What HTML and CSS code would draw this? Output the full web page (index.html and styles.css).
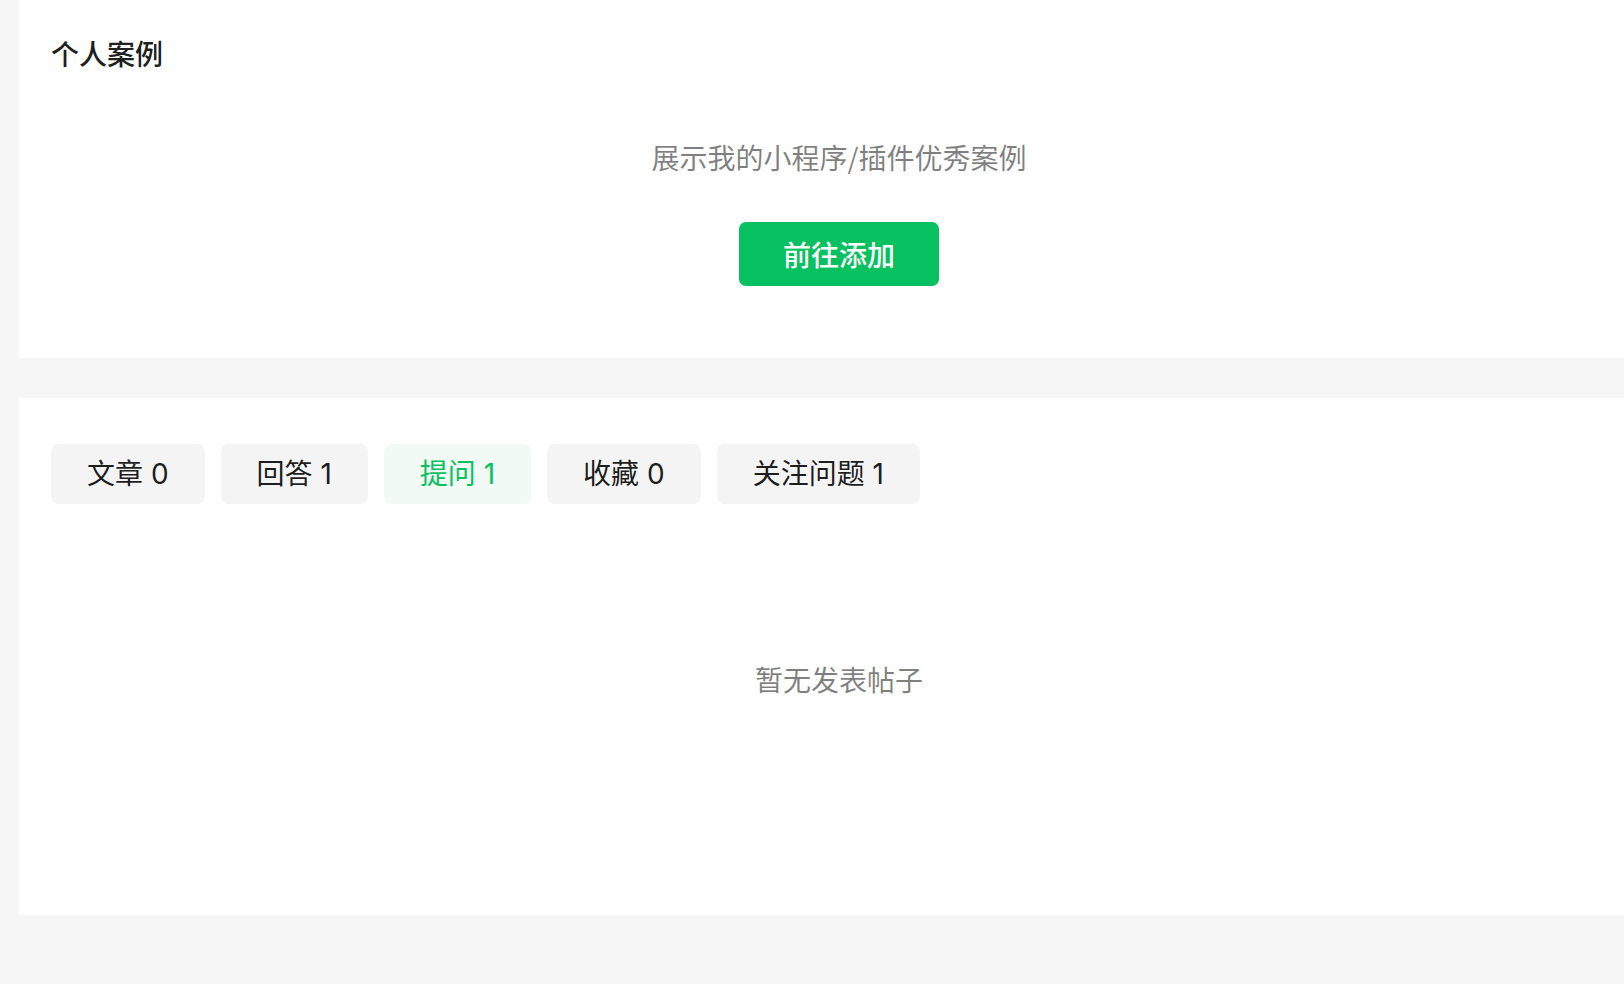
FILE: index.html
```html
<!DOCTYPE html>
<html lang="zh-CN">
<head>
<meta charset="utf-8">
<title>个人主页</title>
<link rel="stylesheet" href="styles.css">
</head>
<body>
<div class="page">
  <section class="card case-card">
    <h2 class="card-title">个人案例</h2>
    <div class="case-empty">
      <p class="case-desc">展示我的小程序/插件优秀案例</p>
      <button class="btn-primary">前往添加</button>
    </div>
  </section>
  <section class="card post-card">
    <div class="tabs">
      <div class="tab">文章 0</div>
      <div class="tab">回答 1</div>
      <div class="tab tab-active">提问 1</div>
      <div class="tab">收藏 0</div>
      <div class="tab">关注问题 1</div>
    </div>
    <p class="post-empty">暂无发表帖子</p>
  </section>
</div>
</body>
</html>
```

FILE: styles.css
```css
* { box-sizing: border-box; }
html, body {
  margin: 0;
  padding: 0;
  background: #f6f6f6;
  font-family: "Noto Sans CJK SC", "Noto Sans", sans-serif;
  color: rgba(0, 0, 0, 0.9);
}
body {
  overflow: hidden;
}
.page {
  padding-left: 19px;
  display: flex;
  flex-direction: column;
  gap: 40px;
  width: 1659px;
}
.card {
  background: #fff;
  width: 1640px;
}
.case-card {
  height: 358px;
  padding: 33px 32px 0;
}
.card-title {
  margin: 0;
  font-size: 28px;
  line-height: 40px;
  font-weight: 500;
}
.case-empty {
  display: flex;
  flex-direction: column;
  align-items: center;
  padding-top: 64px;
}
.case-desc {
  margin: 0;
  font-size: 28px;
  line-height: 40px;
  color: rgba(0, 0, 0, 0.5);
}
.btn-primary {
  margin-top: 45px;
  width: 200px;
  height: 64px;
  border: none;
  border-radius: 7px;
  background: #07c160;
  color: #fff;
  font-family: inherit;
  font-size: 28px;
  font-weight: 500;
  padding: 0;
}
.post-card {
  height: 517px;
  padding: 46px 32px 0;
}
.tabs {
  display: flex;
  gap: 16px;
}
.tab {
  height: 60px;
  padding: 0 36px;
  border-radius: 8px;
  background: #f4f4f4;
  font-family: "Inter", "Noto Sans CJK SC", sans-serif;
  font-size: 28px;
  line-height: 60px;
  color: rgba(0, 0, 0, 0.9);
}
.tab-active {
  background: #f1faf4;
  color: #07c160;
}
.post-empty {
  margin: 155px 0 0;
  text-align: center;
  font-size: 28px;
  line-height: 40px;
  color: rgba(0, 0, 0, 0.5);
}
```
